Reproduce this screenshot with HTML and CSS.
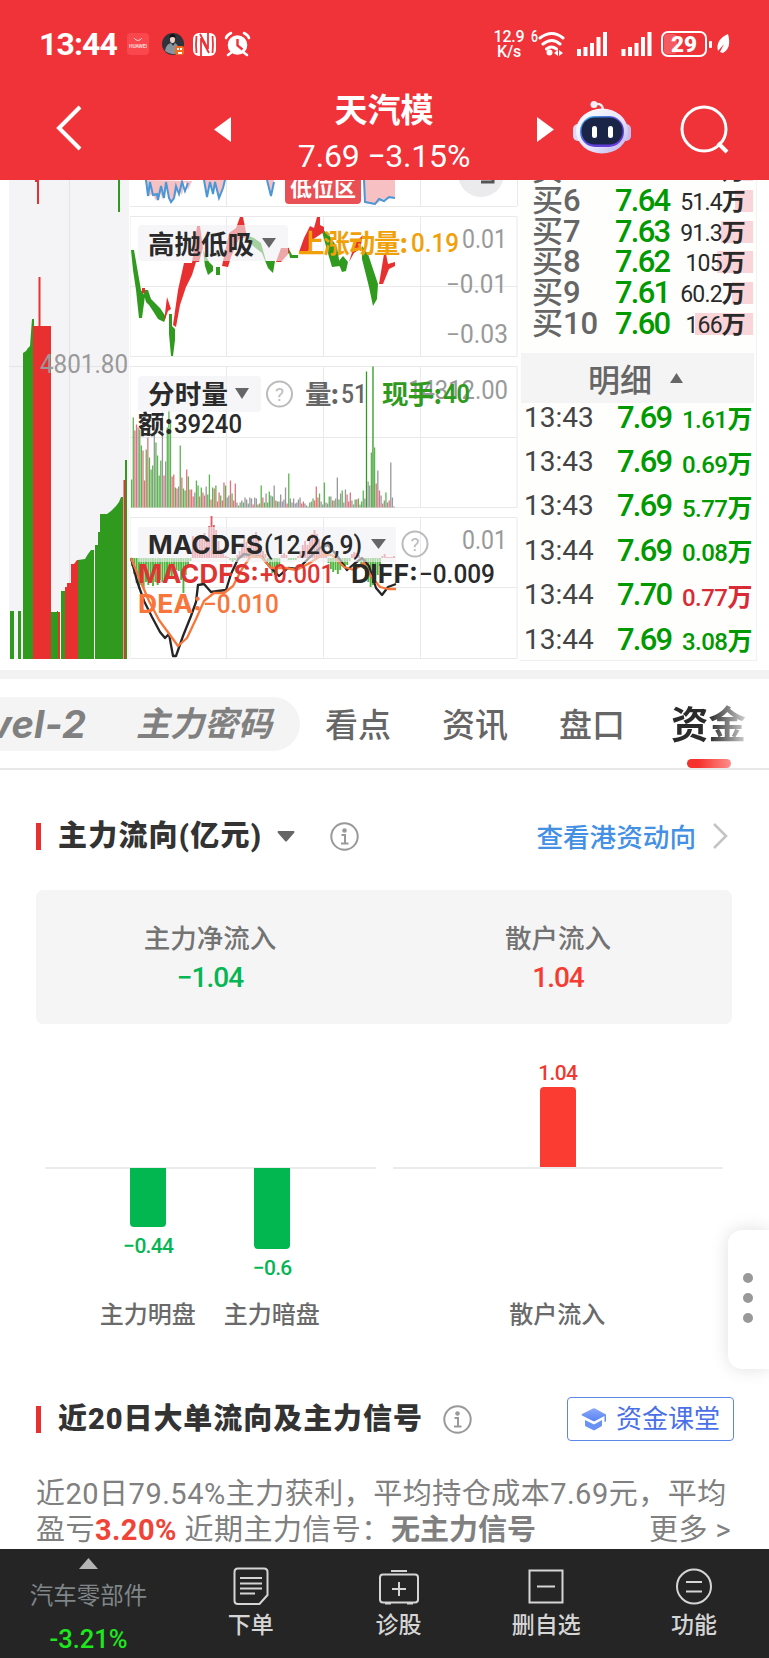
FILE: index.html
```html
<!DOCTYPE html>
<html lang="zh-CN">
<head>
  <meta charset="UTF-8">
  <title>天汽模</title>
  <link rel="stylesheet" href="styles.css">
</head>
<body>
  <header class="header">
    <div class="status">
      <span class="clock">13:44</span>
      <svg class="status-icons" width="128" height="28" viewBox="124 30 128 28">
        <rect x="127" y="33" width="22" height="22" rx="4" fill="#f9474d"/>
        <path d="M134 38q4 5 8 0" fill="none" stroke="#ffc9cb"/>
        <text x="129" y="48" class="tiny" textLength="18">HUAWEI</text>
        <circle cx="173" cy="44" r="11" fill="#30333c"/>
        <path d="M165 51q1-7 6-8l2 3 2-3q4 2 4 9-6 5-14-1z" fill="#88959c"/>
        <ellipse cx="172.500" cy="39.500" rx="2.500" ry="3.500" fill="#f0d2c5"/>
        <path d="M169.500 38q0-4 3-4t3 4q-3-2-6 0" fill="#111"/>
        <rect x="175" y="46" width="9" height="9" rx="2" fill="#f36a21"/>
        <path d="M177 48h2v2h-2zm3 0h2v2h-2zm-2 4h4v2h-4z" fill="#fff"/>
        <rect x="193" y="33" width="23" height="23" rx="6" fill="#fff"/>
        <path d="M201 56V38l8 15M208 33v16l-8-15M196.500 36q-1 9 0 17M212.500 36q1 9 0 17" fill="none" stroke="#f03239" stroke-width="1.800"/>
        <circle cx="237.500" cy="45" r="9.800" fill="#fff"/>
        <path d="M237.500 39v6.500l5 4" fill="none" stroke="#f03239" stroke-width="2.400"/>
        <path d="M226 38q1-3 5-5M249 38q-1-3-5-5M232 52l-4 3M243 52l4 3" fill="none" stroke="#fff" stroke-width="2.600" stroke-linecap="round"/>
      </svg>
      <span class="speed">12.9<br>K/s</span>
      <svg class="signal" width="204" height="30" viewBox="529 29 204 30">
        <text x="531" y="42" class="six" textLength="7" lengthAdjust="spacingAndGlyphs">6</text>
        <g fill="none" stroke="#fff" stroke-width="3" stroke-linecap="round">
          <path d="M540 38q12-9 23 0M543 44q9-7 17 0M546.500 49q5-4 10 0"/>
        </g>
        <circle cx="549.500" cy="52.500" r="3" fill="#fff"/>
        <path d="M558 50l-4 3 4 3zM559 50l4 3-4 3z" fill="#fff"/>
        <path d="M577 49h4v7h-4zM583.500 47h4v9h-4zM590 43h4v13h-4zM596.500 37h4v19h-4zM603 32h4v24h-4z" fill="#fff"/>
        <path d="M621.500 49h4v7h-4zM628 47h4v9h-4zM634.500 43h4v13h-4zM641 37h4v19h-4zM647.500 32h4v24h-4z" fill="#fff"/>
        <rect x="662" y="32" width="44" height="24" rx="6" fill="none" stroke="#fff" stroke-width="2"/>
        <rect x="664" y="34" width="13" height="20" rx="4" fill="#f45b60"/>
        <text x="671" y="52" class="battery" textLength="26" lengthAdjust="spacingAndGlyphs">29</text>
        <rect x="709" y="41" width="3" height="7" rx="1" fill="#fff"/>
        <path d="M728 34q4 14-5 19l-3-1 4-8-6 7q-3-11 10-17z" fill="#fff"/>
      </svg>
    </div>
    <div class="titlebar">
      <svg width="30" height="48" viewBox="0 0 30 48"><path d="M25 3L4 24l21 21" fill="none" stroke="#fff" stroke-width="4"/></svg>
      <svg class="prev" width="17" height="25" viewBox="0 0 17 25"><path d="M17 0v25L0 12.500z" fill="#fff"/></svg>
      <div class="stock">
        <h1>天汽模</h1>
        <p>7.69 −3.15%</p>
      </div>
      <svg class="next" width="17" height="25" viewBox="0 0 17 25"><path d="M0 0v25l17-12.500z" fill="#fff"/></svg>
      <svg class="robot" width="58" height="54" viewBox="0 0 58 54">
        <defs>
          <linearGradient id="shell" x1="0" y1="0" x2="1" y2="1"><stop offset="0" stop-color="#fff"/><stop offset=".6" stop-color="#e4e2fb"/><stop offset="1" stop-color="#b9aee8"/></linearGradient>
          <linearGradient id="visor" x1="0" y1="0" x2="1" y2="1"><stop offset="0" stop-color="#3ac3f4"/><stop offset=".5" stop-color="#5b48d8"/><stop offset="1" stop-color="#6e34dd"/></linearGradient>
        </defs>
        <path d="M22 4q8-1 8 6" fill="none" stroke="#eee" stroke-width="2.500"/>
        <circle cx="21" cy="4.500" r="3.500" fill="#f3eefa"/>
        <rect x="0" y="24" width="10" height="17" rx="5" fill="#dcd8f5"/>
        <rect x="48" y="24" width="10" height="17" rx="5" fill="#c9bdf0"/>
        <ellipse cx="29" cy="31" rx="26" ry="22.500" fill="url(#shell)"/>
        <rect x="7" y="16" width="44" height="31" rx="15" fill="url(#visor)"/>
        <rect x="8.500" y="17.500" width="41" height="27" rx="13" fill="#192447"/>
        <rect x="19" y="26" width="5" height="12" rx="2.500" fill="#fff"/>
        <rect x="35" y="26" width="5" height="12" rx="2.500" fill="#fff"/>
      </svg>
      <svg class="search" width="50" height="50" viewBox="0 0 50 50"><circle cx="24" cy="24" r="22" fill="none" stroke="#fff" stroke-width="3"/><path d="M38 38l9 9" stroke="#fff" stroke-width="4"/></svg>
    </div>
  </header>

  <section class="market">
    <svg class="kline" width="130" height="481" viewBox="0 180 130 481">
      <rect x="9" y="180" width="120" height="479" fill="#f4f4f6"/>
      <path d="M69.500 180v479M9 366.500h120" stroke="#e4e4e8"/>
      <path d="M10 611h4v48h-4zM18 611h3v48h-3zM23 353l3-2 2-3 2-2 2-27h2v340H23zM118 180h2v32h-2zM51 612h6v-1h1v48h-7zM61 591h4v68h-4zM78 560l7-1 3-5 3-4h3v109H78zM95 545h3v-13h2v-18h7l4-3 5-5 3-4 2-5h2v162H95zM125 460h2v199h-2z" fill="#2f9a1e"/>
      <path d="M35 180h4v24h-2v-22h-2zM38.500 277h2v49h10.500v333H33V326h5.500zM58 612h2v47h-2zM65 587h2v-4h4v-19h3l3-4h1v99H65zM123.500 480h1.800v179h-1.800z" fill="#e83030"/>
      <text x="40" y="373" class="axis" textLength="88" lengthAdjust="spacingAndGlyphs">4801.80</text>
    </svg>

    <svg class="indicators" width="390" height="481" viewBox="130 180 390 481">
      <g class="grid">
        <path d="M130 206.500h387M130 216.500h387v140H130zM130 286.500h387M130 366.500h387v141H130zM130 437.500h387M130 517.500h387v141H130zM130 587.500h387"/>
        <path d="M226.500 180v26M226.500 216v140M226.500 366v141M226.500 517v141M323.500 216v140M323.500 366v141M323.500 517v141M420.500 180v26M420.500 216v140M420.500 366v141M420.500 517v141M517.500 180v26"/>
      </g>

      <!-- position curve -->
      <path d="M146 180l3 16 4-2 3 7 4-8 3 7 3-13 3 8 2 6 3-2 4-10 4 6 3-14 3 9 4-9zM204 180l3 17 3-15 3 12 2-12 4 16 4-10 2-8zM268 180l3 16 3-16zM364 180v23l11 2 8-6 12-1v-18z" fill="#f7c1c4"/>
      <path d="M146 180l2 16 2-14 3 13 4-1 1 6 3-14 3 12 2-16 3 16 2 4 3-4 2-12 3 8 3-12 3 9 3-8M204 180l3 17 3-15 3 12 2-12 4 16 4-10 2-8M267 180l4 16 3-14M364 180l1 22 10 2 4-5 5 2 5-4 6 1" fill="none" stroke="#4a97d8" stroke-width="2"/>
      <rect x="285" y="172" width="76" height="32" rx="4" fill="#e85055"/>
      <text x="290" y="196" class="zone" textLength="66">低位区</text>
      <circle cx="481" cy="174" r="23" fill="#ebebed"/>
      <path d="M481 182h12v-4" fill="none" stroke="#555" stroke-width="3"/>

      <!-- 高抛低吸 -->
      <g fill="#2f9a1e">
        <path d="M131 250h3l7 40 4 6-3 22h-3l-3-28-3-20zM143 290h5l3 9 4 4 5 5 6 9-2 5-6-3-5-8-4-6-3-3zM169 314h3v12l3 3v11l-2 16h-2l-2-22zM203 250l6 12 4 4v5l-5 4-3-9zM216 267h4v8h-4zM246 235l8 3 7 5 5 18h9l-2 12-5-5-6-15-9-7zM288 247l4 8h6v3h-8zM321 228l8 7 8 12 3 19-8 1-5-17zM338 262l5-6 5 6-2 9-4 1zM362 246l6 8 10 30-1 15-4 7-4-19-7-28z"/>
      </g>
      <g fill="#e83030">
        <path d="M142 288h3v5h-3zM164 322l3-25 4 12-3 2zM173 325l5-35 6-27h8l5-37h3l3 22-4 14h-3l-4 13-6 12-6 18-4 22zM222 266l7-33 7-5 4-11h3l4 20-8 2-8 18-3 10zM276 262l5-14h8v5l-8 9zM299 252l5-14 6-12 4 2 3-11h3v8l4 2v5l-12 8-4 12zM349 262l6-19 8-8-3 14-6 4zM379 284l5-30h2l2 10 7-2v4l-6 3-6 15z"/>
      </g>
      <rect x="138" y="225" width="150" height="36" rx="4" class="badge"/>
      <text x="148" y="254" class="name" textLength="106">高抛低吸</text>
      <path d="M262 238h14l-7 10z" fill="#666"/>
      <text x="298" y="253" class="name amber" textLength="110">上涨动量:</text>
      <text x="411" y="252" class="num amber" textLength="48" lengthAdjust="spacingAndGlyphs">0.19</text>
      <text x="462" y="248" class="axis" textLength="45" lengthAdjust="spacingAndGlyphs">0.01</text>
      <text x="446" y="293" class="axis" textLength="61" lengthAdjust="spacingAndGlyphs">−0.01</text>
      <text x="446" y="343" class="axis" textLength="62" lengthAdjust="spacingAndGlyphs">−0.03</text>

      <!-- 分时量 -->
      <g id="volume"></g>
      <rect x="138" y="376" width="123" height="36" rx="4" class="badge"/>
      <text x="148" y="404" class="name" textLength="80">分时量</text>
      <path d="M235 388h14l-7 11z" fill="#666"/>
      <circle cx="279.500" cy="394" r="12.500" class="ring"/>
      <text x="279.500" y="401" class="help">?</text>
      <text x="305" y="404" class="name gray" textLength="34">量:</text>
      <text x="341" y="403" class="num gray" textLength="26" lengthAdjust="spacingAndGlyphs">51</text>
      <text x="408" y="399" class="axis" textLength="100" lengthAdjust="spacingAndGlyphs">14312.00</text>
      <text x="382" y="404" class="name green" textLength="60">现手:</text>
      <text x="443" y="403" class="num green bold" textLength="27" lengthAdjust="spacingAndGlyphs">40</text>
      <text x="138" y="434" class="name" textLength="35">额:</text>
      <text x="174" y="433" class="num" textLength="68" lengthAdjust="spacingAndGlyphs">39240</text>

      <!-- MACDFS -->
      <g id="macd"></g>
      <path d="M131 558l6 23 7 20 8 16 8 15 5 6 4-4 4 22 3 0 7-20 8-20 5-14 2-17 6-1 7 8 7-1 8-1 5-16 7-15 6-5 10 2 8 1 8 10 9 9 9-8 10 1 11-11 11-10 8-3 10 12 9 13 7-6 8-6 7 8 7 22 6 7 6-8 8-3" fill="none" stroke="#252525" stroke-width="2.300" stroke-linejoin="round"/>
      <path d="M131 558l9 22 9 21 10 19 11 15 8 11 9-8 9-19 8-18 10-8 10 0 9-7 9-17 9-13 10 1 10 11 15 0 10 2 12-6 14-9 10 0 12 12 10 3 10-7 7 13 9 11 8 2h8" fill="none" stroke="#f8763b" stroke-width="2.300" stroke-linejoin="round"/>
      <rect x="138" y="527" width="258" height="35" class="badge"/>
      <text x="148" y="554" class="latin" textLength="115" lengthAdjust="spacingAndGlyphs">MACDFS</text>
      <text x="264" y="554" class="num" textLength="98" lengthAdjust="spacingAndGlyphs">(12,26,9)</text>
      <path d="M371 539h15l-7.500 10z" fill="#666"/>
      <circle cx="415" cy="544" r="12.500" class="ring"/>
      <text x="415" y="551" class="help">?</text>
      <text x="462" y="549" class="axis" textLength="45" lengthAdjust="spacingAndGlyphs">0.01</text>
      <text x="138" y="583" class="latin red" textLength="121" lengthAdjust="spacingAndGlyphs">MACDFS:</text>
      <text x="260" y="583" class="num red" textLength="74" lengthAdjust="spacingAndGlyphs">+0.001</text>
      <text x="351" y="583" class="latin" textLength="67" lengthAdjust="spacingAndGlyphs">DIFF:</text>
      <text x="419" y="583" class="num" textLength="76" lengthAdjust="spacingAndGlyphs">−0.009</text>
      <text x="138" y="613" class="latin orange" textLength="64" lengthAdjust="spacingAndGlyphs">DEA:</text>
      <text x="203" y="613" class="num orange" textLength="76" lengthAdjust="spacingAndGlyphs">−0.010</text>
    </svg>

    <div class="book">
      <ul class="bids">
        <li><span>买5</span><b>7.65</b><em><i style="width:16px"></i>214<strong>万</strong></em></li>
        <li><span>买6</span><b>7.64</b><em><i style="width:18px"></i>51.4<strong>万</strong></em></li>
        <li><span>买7</span><b>7.63</b><em><i style="width:32px"></i>91.3<strong>万</strong></em></li>
        <li><span>买8</span><b>7.62</b><em><i style="width:36px"></i>105<strong>万</strong></em></li>
        <li><span>买9</span><b>7.61</b><em><i style="width:21px"></i>60.2<strong>万</strong></em></li>
        <li><span>买10</span><b>7.60</b><em><i style="width:58px"></i>166<strong>万</strong></em></li>
      </ul>
      <div class="detail-head">明细 <svg width="13" height="10" viewBox="0 0 13 10"><path d="M0 10h13L6.500 0z" fill="#666"/></svg></div>
      <ul class="ticks">
        <li><span>13:43</span><b>7.69</b><em>1.61<strong>万</strong></em></li>
        <li><span>13:43</span><b>7.69</b><em>0.69<strong>万</strong></em></li>
        <li><span>13:43</span><b>7.69</b><em>5.77<strong>万</strong></em></li>
        <li><span>13:44</span><b>7.69</b><em>0.08<strong>万</strong></em></li>
        <li><span>13:44</span><b>7.70</b><em class="up">0.77<strong>万</strong></em></li>
        <li><span>13:44</span><b>7.69</b><em>3.08<strong>万</strong></em></li>
      </ul>
    </div>
  </section>

  <nav class="tabs">
    <div class="pill"><span class="level">vel-2</span><span class="secret">主力密码</span></div>
    <span>看点</span>
    <span>资讯</span>
    <span>盘口</span>
    <span class="active">资金</span>
  </nav>

  <main>
    <div class="section-title flow-title">
      <h2>主力流向(亿元)</h2>
      <svg class="caret" width="18" height="11" viewBox="0 0 18 11"><path d="M1 0h16q1 1 0 2l-7 8q-1 1-2 0L1 2q-1-1 0-2z" fill="#666"/></svg>
      <svg class="info" width="29" height="29" viewBox="0 0 29 29"><circle cx="14.500" cy="14.500" r="13.200" fill="none" stroke="#999" stroke-width="2"/><circle cx="14.500" cy="8.500" r="2.300" fill="#999"/><path d="M11.500 13h3.500v8M11 21.500h7.500" fill="none" stroke="#999" stroke-width="2"/></svg>
      <a class="more">查看港资动向</a>
      <svg class="chevron" width="16" height="28" viewBox="0 0 16 28"><path d="M2 2l12 12L2 26" fill="none" stroke="#c4c4c4" stroke-width="2.600"/></svg>
    </div>

    <div class="summary">
      <div><p>主力净流入</p><b class="down">−1.04</b></div>
      <div><p>散户流入</p><b>1.04</b></div>
    </div>

    <div class="bars">
      <div class="bar-group">
        <div class="upper"></div>
        <div class="lower">
          <div class="col"><i style="height:59px"></i><span>−0.44</span></div>
          <div class="col"><i style="height:81px"></i><span>−0.6</span></div>
        </div>
        <div class="names"><span>主力明盘</span><span>主力暗盘</span></div>
      </div>
      <div class="bar-group">
        <div class="upper"><div class="col"><span>1.04</span><i style="height:80px"></i></div></div>
        <div class="lower"></div>
        <div class="names"><span>散户流入</span></div>
      </div>
    </div>

    <div class="section-title signal-title">
      <h2>近20日大单流向及主力信号</h2>
      <svg class="info" width="29" height="29" viewBox="0 0 29 29"><circle cx="14.500" cy="14.500" r="13.200" fill="none" stroke="#999" stroke-width="2"/><circle cx="14.500" cy="8.500" r="2.300" fill="#999"/><path d="M11.500 13h3.500v8M11 21.500h7.500" fill="none" stroke="#999" stroke-width="2"/></svg>
      <a class="lesson">
        <svg width="26" height="24" viewBox="0 0 26 24">
          <defs><linearGradient id="cap" x1="0" y1="0" x2="0" y2="1"><stop offset="0" stop-color="#8da9fa"/><stop offset="1" stop-color="#5583f2"/></linearGradient></defs>
          <path d="M12 1.500q1-.6 2 0L25 7.500v7h-1.500V9L14 14q-1 .6-2 0L1 8.500q-1-.8 0-1.500z" fill="url(#cap)"/>
          <path d="M4 13l8 4q1 .5 2 0l7-4v5q0 1-1 1.500L14 23q-1 .6-2 0l-7-3.500q-1-.5-1-1.500z" fill="#6b92f5"/>
        </svg>资金课堂</a>
    </div>
    <div class="note">
      <p class="line1">近20日79.54%主力获利，平均持仓成本7.69元，平均</p>
      <p class="line2"><span>盈亏<b>3.20%</b> 近期主力信号：</span><strong>无主力信号</strong><a>更多 &gt;</a></p>
    </div>
  </main>

  <div class="side"><i></i><i></i><i></i></div>

  <footer class="toolbar">
    <div class="sector">
      <svg width="19" height="11" viewBox="0 0 19 11"><path d="M0 11h19L9.500 0z" fill="#b5b5b5"/></svg>
      <span>汽车零部件</span>
      <b>-3.21%</b>
    </div>
    <div class="tool">
      <svg width="40" height="40" viewBox="0 0 40 40"><path d="M7 2.500h26q3.500 0 3.500 3.500v23l-8 9H7q-3.500 0-3.500-3.500V6q0-3.500 3.500-3.500zM9 12h22M9 17.500h22M9 22.500h22M9 27.500h15"/></svg>
      下单
    </div>
    <div class="tool">
      <svg width="40" height="40" viewBox="0 0 40 40"><path d="M4 8.500h32q3 0 3 3v22q0 3-3 3H4q-3 0-3-3v-22q0-3 3-3zM12 5h16M20 16v14M13 23h14M6 37.500h6M28 37.500h6"/></svg>
      诊股
    </div>
    <div class="tool">
      <svg width="40" height="40" viewBox="0 0 40 40"><path d="M3.500 4.500h33v32h-33zM11 20.500h18"/></svg>
      删自选
    </div>
    <div class="tool">
      <svg width="40" height="40" viewBox="0 0 40 40"><circle cx="20" cy="20.500" r="17"/><path d="M12 16h16M12 25.500h16"/></svg>
      功能
    </div>
  </footer>
  <script src="charts.js"></script>
</body>
</html>
```
FILE: styles.css
```css
* {
  box-sizing: border-box;
}

body {
  margin: 0;
  width: 769px;
  height: 1658px;
  overflow: hidden;
  position: relative;
  background: #fff;
  font-family: Roboto, "Noto Sans CJK SC", sans-serif;
  color: #333;
  display: flex;
  flex-direction: column;
}

h1, h2, p, ul {
  margin: 0;
  padding: 0;
  font-weight: normal;
}

ul {
  list-style: none;
}

em, i {
  font-style: normal;
}

svg {
  display: block;
  flex: none;
}

/* header */
.header {
  height: 180px;
  flex: none;
  background: #f03239;
  color: #fff;
  position: relative;
  z-index: 1;
}

.status {
  height: 88px;
  display: flex;
  align-items: center;
  padding-left: 39px;
}

.clock {
  width: 85px;
  font-size: 32px;
  font-weight: 700;
  letter-spacing: -0.900px;
  white-space: nowrap;
}

.speed {
  margin-left: 239px;
  width: 37px;
  padding-right: 1px;
  font-size: 16px;
  line-height: 15px;
  font-weight: 500;
  text-align: center;
  letter-spacing: -0.200px;
}

.signal {
  margin-left: 1px;
}

.tiny {
  font-size: 5px;
  font-weight: 700;
  fill: #ffd5d5;
}

.six {
  font-size: 16px;
  font-weight: 500;
  fill: #fff;
}

.battery {
  font-size: 22px;
  font-weight: 900;
  fill: #fff;
}

.titlebar {
  height: 92px;
  display: flex;
  align-items: flex-start;
  padding-left: 55px;
}

.titlebar > svg {
  margin-top: 16px;
}

.titlebar .prev {
  margin: 29px 0 0 129px;
}

.stock {
  width: 306px;
  text-align: center;
}

.stock h1 {
  font-size: 33px;
  line-height: 40px;
  font-weight: 700;
  margin-top: 3px;
}

.stock p {
  font-size: 32px;
  line-height: 40px;
  margin-top: 5px;
  white-space: nowrap;
  letter-spacing: -0.200px;
}

.titlebar .next {
  margin-top: 29px;
}

.titlebar .robot {
  margin: 12px 0 0 19px;
}

.titlebar .search {
  margin: 17px 0 0 49px;
}

/* charts */
.market {
  height: 499px;
  flex: none;
  display: flex;
  border-bottom: 9px solid #f3f3f3;
}

.grid path {
  fill: none;
  stroke: #e9e9e9;
}

.axis {
  font-size: 25px;
  fill: #999;
}

.badge {
  fill: #f1f1f3;
  fill-opacity: 0.62;
}

.name {
  font-size: 26.500px;
  font-weight: 600;
  font-family: "Noto Sans CJK SC", sans-serif;
  fill: #2a2a2a;
}

.num {
  font-size: 26px;
  font-weight: 500;
  fill: #2a2a2a;
}

.latin {
  font-family: Inter, sans-serif;
  font-size: 26px;
  font-weight: 700;
  fill: #2a2a2a;
}

.amber { fill: #f0a10a; }
.gray { fill: #666; }
.green { fill: #2f9a1e; }
.red { fill: #df3434; }
.orange { fill: #f8763b; }
.bold { font-weight: 600; }

.zone {
  font-size: 22px;
  font-weight: 700;
  fill: #fff;
}

.ring {
  fill: none;
  stroke: #bbb;
  stroke-width: 2;
}

.help {
  font-size: 19px;
  fill: #bbb;
  text-anchor: middle;
}

.book {
  width: 237px;
  height: 481px;
  border-right: 1px solid #f2f2f2;
  border-bottom: 1px solid #f0f0f0;
  background: #fefefd;
  font-size: 31px;
}

.bids {
  height: 173px;
  margin: 0 3px 0 12px;
  overflow: hidden;
}

.bids li {
  height: 30.700px;
  line-height: 30px;
  display: flex;
  align-items: center;
  white-space: nowrap;
}

.bids li:first-child {
  margin-top: -25px;
}

.bids span {
  width: 83px;
  color: #666;
  font-size: 31px;
  font-weight: 500;
}

.book b {
  color: #090;
  font-weight: 500;
  letter-spacing: -1.800px;
}

.bids b {
  width: 57px;
}

.bids em {
  flex: 1;
  height: 22px;
  line-height: 25px;
  position: relative;
  padding-right: 8px;
  font-size: 23px;
  letter-spacing: -0.800px;
  text-align: right;
  color: #2a2a2a;
  z-index: 0;
}

.bids i {
  position: absolute;
  right: 0;
  top: 0;
  height: 22px;
  background: #f9d5d9;
  z-index: -1;
}

.book strong {
  font-weight: 700;
  font-size: 24px;
}

.detail-head {
  height: 50px;
  width: 233px;
  margin-left: 1px;
  padding-left: 67px;
  background: #f4f4f4;
  color: #666;
  display: flex;
  align-items: center;
  gap: 18px;
  font-size: 32px;
  font-weight: 500;
}

.ticks {
  margin: -8px 4px 0 4px;
}

.ticks li {
  height: 44.400px;
  display: flex;
  align-items: center;
  white-space: nowrap;
}

.ticks span {
  width: 93px;
  font-size: 28px;
  color: #444;
}

.ticks b {
  width: 57px;
}

.ticks em {
  flex: 1;
  text-align: right;
  color: #090;
  font-size: 24px;
  font-weight: 500;
  letter-spacing: -0.500px;
}

.ticks strong {
  font-size: 25px;
}

.ticks em.up {
  color: #d82b35;
}

/* tabs */
.tabs {
  height: 91px;
  flex: none;
  display: flex;
  align-items: center;
  border-bottom: 2px solid #e8e8e8;
  font-size: 33px;
  font-weight: 500;
  line-height: 40px;
  color: #666;
}

.tabs > span {
  width: 117px;
  margin-top: 4px;
}

.pill {
  width: 300px;
  height: 54px;
  margin-right: 25px;
  border-radius: 0 27px 27px 0;
  background: #f4f4f4;
  display: flex;
  align-items: center;
  overflow: hidden;
  font-style: italic;
  color: #808080;
}

.level {
  width: 147px;
  margin-left: -11px;
  font-family: Inter, sans-serif;
  font-size: 38px;
  font-weight: 700;
  letter-spacing: 0.300px;
}

.secret {
  font-size: 34px;
  font-weight: 700;
}

.tabs > .active {
  width: 75px;
  height: 100%;
  line-height: 92px;
  margin-top: 0;
  margin-left: -5px;
  position: relative;
  font-size: 37.500px;
  font-weight: 700;
  color: transparent;
  background: linear-gradient(90deg, #2a2a2a 50%, #d0d0d0);
  -webkit-background-clip: text;
  background-clip: text;
}

.active::after {
  content: "";
  position: absolute;
  left: 16px;
  bottom: 0;
  width: 44px;
  height: 9px;
  border-radius: 5px;
  background: linear-gradient(90deg, #f6302b 25%, #fc8f8b);
}

/* fund flow */
main {
  height: 779px;
  flex: none;
  padding: 0 37px 0 36px;
  overflow: hidden;
}

.section-title {
  display: flex;
  align-items: center;
  white-space: nowrap;
}

.section-title h2 {
  font-size: 29px;
  font-weight: 900;
  line-height: 27px;
  letter-spacing: 0.950px;
  border-left: 5px solid #e83030;
  padding-left: 17px;
}

.flow-title {
  height: 120px;
  padding-top: 12px;
}

.flow-title h2 {
  letter-spacing: 1.200px;
}

.caret {
  margin-left: 15px;
}

.flow-title .info {
  margin-left: 35px;
}

.more {
  margin-left: auto;
  margin-top: -2px;
  font-size: 26.600px;
  font-weight: 500;
  color: #4390e4;
}

.chevron {
  margin: 0 4px 0 16px;
}

.summary {
  height: 134px;
  background: #f5f5f5;
  border-radius: 7px;
  display: flex;
  text-align: center;
}

.summary div {
  flex: 1;
  padding-top: 29px;
}

.summary p {
  font-size: 26.500px;
  line-height: 40px;
  font-weight: 500;
  color: #737373;
}

.summary b {
  display: block;
  font-size: 28px;
  line-height: 38px;
  font-weight: 500;
  letter-spacing: -1px;
  color: #f53c32;
}

.summary b.down,
.lower span {
  color: #05b654;
}

.bars {
  height: 320px;
  padding: 0 9px;
  display: flex;
  gap: 17px;
}

.bar-group {
  flex: 1;
}

.upper {
  height: 145px;
  border-bottom: 2px solid #ebebeb;
  display: flex;
  align-items: flex-end;
  justify-content: center;
}

.lower {
  height: 128px;
  display: flex;
  justify-content: center;
  gap: 64px;
}

.col {
  width: 60px;
  display: flex;
  flex-direction: column;
  align-items: center;
  font-size: 21px;
  font-weight: 500;
  line-height: 27px;
  letter-spacing: -0.700px;
  color: #ef3a31;
}

.col i {
  width: 36px;
}

.upper .col i {
  border-radius: 4px 4px 0 0;
  background: #fa3c33;
}

.lower .col {
  line-height: 39px;
}

.lower .col i {
  margin-top: -1px;
  border-radius: 0 0 4px 4px;
  background: #02b650;
}

.names {
  display: flex;
  justify-content: center;
  gap: 28px;
  padding-right: 1px;
  font-size: 24px;
  font-weight: 500;
  line-height: 36px;
  color: #6a6a6a;
}

.signal-title {
  height: 60px;
  margin-top: 45px;
  margin-bottom: 27px;
}

.signal-title .info {
  margin-left: 20px;
}

.lesson {
  width: 167px;
  height: 44px;
  margin-left: auto;
  margin-right: -2px;
  border: 1.500px solid #5c86e8;
  border-radius: 4px;
  display: flex;
  align-items: center;
  justify-content: center;
  gap: 9px;
  font-size: 26px;
  line-height: 36px;
  color: #4a70e8;
}

.note {
  width: 700px;
  font-size: 29px;
  font-weight: 500;
  line-height: 36px;
  color: #808080;
  white-space: nowrap;
}

.line1 {
  letter-spacing: 0.500px;
}

.line2 {
  display: flex;
}

.line2 span {
  width: 355px;
  letter-spacing: 0.450px;
}

.note b {
  font-weight: 700;
  color: #f04438;
}

.note a {
  margin-left: auto;
  margin-right: 5px;
  letter-spacing: 0.400px;
}

/* floating handle */
.side {
  position: absolute;
  right: 0;
  top: 1230px;
  width: 41px;
  height: 139px;
  padding-bottom: 3px;
  border-radius: 14px 0 0 14px;
  background: #fff;
  box-shadow: 0 0 18px rgba(0, 0, 0, 0.13);
  display: flex;
  flex-direction: column;
  align-items: center;
  justify-content: center;
  gap: 10px;
}

.side i {
  width: 10px;
  height: 10px;
  margin-right: 2px;
  border-radius: 50%;
  background: #999;
}

/* bottom bar */
.toolbar {
  height: 109px;
  flex: none;
  background: #252525;
  color: #d5d5d5;
  display: flex;
  position: relative;
}

.sector {
  width: 177px;
  padding-top: 9px;
  display: flex;
  flex-direction: column;
  align-items: center;
  color: #7f8588;
  font-size: 23.500px;
}

.sector span {
  line-height: 36px;
  margin-top: 9px;
}

.sector b {
  font-size: 25.500px;
  line-height: 36px;
  margin-top: 7px;
  font-weight: 500;
  color: #1de81d;
}

.tool {
  width: 147.700px;
  padding-top: 17px;
  display: flex;
  flex-direction: column;
  align-items: center;
  font-size: 23px;
  font-weight: 500;
  line-height: 39px;
}

.tool svg {
  fill: none;
  stroke: #d5d5d5;
  stroke-width: 2;
}
```
FILE: charts.js
```js
const NS = "http://www.w3.org/2000/svg";
const colors = { g: "#5cb552", r: "#e0737c", k: "#98989c" };

function addBar(group, x, y, height, width, color) {
  const rect = document.createElementNS(NS, "rect");
  rect.setAttribute("x", x);
  rect.setAttribute("y", y);
  rect.setAttribute("width", width);
  rect.setAttribute("height", height);
  rect.setAttribute("fill", color);
  group.appendChild(rect);
}

// height + direction of each minute
const volume = "28g 90g 77r 83r 80k 78g 62g 57r 27r 58g 70r 50g 38g 42g 73k 65g 52g 32g 47g 95k 32r 46k 80g 97g 85g 31r 33r 20g 19r 21k 62g 30r 19g 17g 38r 31g 18r 18r 11r 15k 27g 22g 11r 20g 15r 12r 21k 13g 33g 8r 20g 19r 22g 6r 15r 12g 7r 25r 22g 10k 12k 27r 14g 7r 24r 5k 2g 5k 7k 5g 10k 8k 4k 10k 9k 3r 10k 9k 3g 4r 22g 10r 5g 14k 5g 16g 12k 11g 22k 7r 6g 6k 13k 6k 8k 20k 4r 34g 9k 5k 9k 4k 5k 8k 10k 4r 6r 4k 2k 1k 5g 6k 9g 7r 21r 10r 14g 6k 3k 25g 5k 4k 11g 11k 7r 7g 9k 30k 8g 14k 17g 5k 18k 13r 6r 15r 7k 3k 8g 8r 9g 3k 6g 17g 9k 136g 26k 22k 55g 141g 60g 24r 37k 17r 12k 4r 7k 15g 5k 7r 45k 10k 1k"
  .split(" ");
const volumeGroup = document.getElementById("volume");
const step = 264 / volume.length;
volume.forEach((item, i) => {
  const h = parseInt(item, 10);
  const color = h > 130 ? "#2f9a1e" : colors[item.slice(-1)];
  addBar(volumeGroup, 131 + i * step, 507.5 - h, h, 1.3, color);
});

// positive values are drawn above the zero line
const macd = [
  -8, -16, -25, -31, -27, -30, -24, -27, -25, -28, -24, -27, -22, -24, -23, -18, -21, -20, -13, -12,
  -13, -22, -35, -17, -8, -3, 22, 20, 19, 23, 22, 25, 20, 32, 42, 33, 28, 17, 9, 4,
  2, 1, -2, -4, -2, 3, 7, 12, 21, 16, 12, 18, 21, 26, 20, 12, 7, 4, -4, -10,
  -15, -17, -16, -9, 3, 5, 3, -2, -2, -2, -2, 2, 7, 13, 17, 13, 17, 24, 28, 24,
  19, 13, 8, 4, -5, -11, -14, -12, -16, -12, -8, -10, -7, -3, 4, 6, 5, 3, -6, -11,
  -18, -24, -29, -27, -22, -17, -8, 2, 4, 1, 1, 1, 2
];
const macdGroup = document.getElementById("macd");
macd.forEach((v, i) => {
  addBar(macdGroup, 131 + i * 2.34, v > 0 ? 558 - v : 558, Math.abs(v), 1.9, v > 0 ? "#e0606a" : "#4fb53f");
});
```
